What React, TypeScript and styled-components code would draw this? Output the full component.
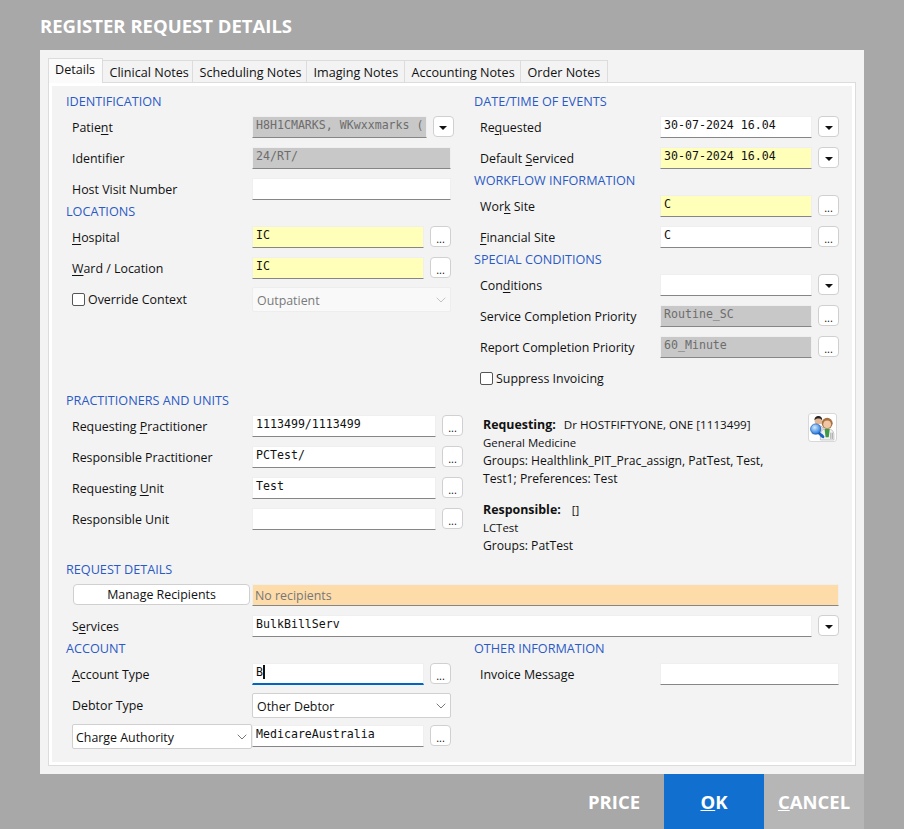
import * as React from 'react';
import styled, {createGlobalStyle} from 'styled-components';
import {ChevronDown} from 'lucide-react';

const GlobalStyle = createGlobalStyle`
  html, body {
    margin: 0;
    padding: 0;
    height: 100%;
    background: #a8a8a8;
  }
  * {
    box-sizing: border-box;
  }
`;

const Page = styled.div`
  width: 904px;
  height: 829px;
  padding-left: 40px;
  display: flex;
  flex-direction: column;
  background: #a8a8a8;
  font-family: "Open Sans", "Noto Sans", sans-serif;
  font-size: 12.4px;
  color: #111;
  overflow: hidden;
`;

const Title = styled.div`
  height: 50px;
  line-height: 52px;
  font-size: 18.5px;
  font-weight: 700;
  color: #fff;
`;

const Dialog = styled.div`
  width: 824px;
  height: 724px;
  padding: 8px 8px 8px;
  background: #f3f3f3;
  display: flex;
  flex-direction: column;
`;

const TabStrip = styled.div`
  display: flex;
  align-items: flex-end;
  height: 25px;
  margin-bottom: -1px;
  position: relative;
  z-index: 1;
`;

const Tab = styled.div<{$active?: boolean; $width: number}>`
  width: ${p => p.$width}px;
  height: ${p => (p.$active ? 25 : 23)}px;
  line-height: ${p => (p.$active ? 21 : 23)}px;
  padding-left: ${p => (p.$active ? 6 : 6.5)}px;
  font-size: 12.6px;
  white-space: nowrap;
  border: 1px solid #dcdcdc;
  border-left-width: ${p => (p.$active ? 1 : 0)}px;
  border-bottom-width: ${p => (p.$active ? 0 : 1)}px;
  background: ${p => (p.$active ? '#fbfbfb' : '#f3f3f3')};
`;

const TabPanel = styled.div`
  flex: 1;
  border: 1px solid #dcdcdc;
  background: #fff;
  padding: 3px;
`;

const Content = styled.div`
  height: 100%;
  background: #f3f3f3;
  padding: 9px 13px 0 14px;
`;

const TopColumns = styled.div`
  display: grid;
  grid-template-columns: 385px 365px;
  column-gap: 23px;
`;

const PractitionerColumns = styled.div`
  display: grid;
  grid-template-columns: 397px 1fr;
  column-gap: 20px;
  height: 169px;
`;

const Heading = styled.div`
  height: 13px;
  line-height: 13px;
  margin-bottom: 4px;
  font-size: 12.65px;
  color: #2a5ac6;
  white-space: nowrap;
`;

const Row = styled.div`
  display: grid;
  grid-template-columns: 180px 1fr;
  align-items: center;
  height: 31px;
  padding-left: 6px;
`;

const Label = styled.div`
  white-space: nowrap;
  u {
    text-underline-offset: 2px;
  }
`;

const Cell = styled.div`
  flex: 1;
  height: 23px;
  display: flex;
  align-items: flex-start;
  gap: 6px;
`;

const toneColours = {
  plain: '#ffffff',
  required: '#ffffb9',
  readonly: '#c8c8c8',
  notice: '#fedcaa',
};

const Field = styled.div<{$tone?: keyof typeof toneColours; $focus?: boolean}>`
  flex: 1;
  min-width: 0;
  height: 22px;
  padding: 0 2px 4px 3px;
  display: flex;
  align-items: center;
  overflow: hidden;
  white-space: nowrap;
  background: ${p => toneColours[p.$tone || 'plain']};
  border: 1px solid #efefef;
  border-bottom: ${p => (p.$focus ? '2px solid #0067c0' : '1px solid #868686')};
  font-family: "DejaVu Sans Mono", "Liberation Mono", monospace;
  font-size: 11.6px;
  color: ${p => (p.$tone === 'readonly' ? '#6d6d6d' : '#111')};
`;

const NoticeField = styled(Field)`
  font-family: "Open Sans", "Noto Sans", sans-serif;
  font-size: 12.4px;
  color: #777;
  padding: 0 2px;
`;

const Caret = styled.span`
  display: inline-block;
  width: 2px;
  height: 14px;
  background: #111;
`;

const SquareButton = styled.button`
  flex: none;
  width: 21px;
  height: 21px;
  padding: 0;
  border: 1px solid #d0d0d0;
  border-radius: 4px;
  background: #fff;
  display: flex;
  align-items: flex-end;
  justify-content: center;
  font-family: "Open Sans", sans-serif;
  font-size: 11px;
  line-height: 15px;
  color: #111;
`;

const ArrowButton = styled(SquareButton)`
  align-items: center;
`;

const Arrow = styled.span`
  margin-top: 2px;
  width: 0;
  height: 0;
  border-left: 4px solid transparent;
  border-right: 4px solid transparent;
  border-top: 4px solid #111;
`;

const Select = styled.div<{$disabled?: boolean}>`
  flex: 1;
  height: 25px;
  margin-top: -1px;
  padding: 1px 3px 0 4px;
  display: flex;
  align-items: center;
  justify-content: space-between;
  white-space: nowrap;
  background: ${p => (p.$disabled ? '#f9f9f9' : '#fff')};
  border: 1px solid ${p => (p.$disabled ? '#ededed' : '#d0d0d0')};
  border-radius: 2px;
  color: ${p => (p.$disabled ? '#7a7a7a' : '#111')};
  svg {
    color: ${p => (p.$disabled ? '#b5b5b5' : '#555')};
    margin-right: -2px;
  }
`;

const ChargeSelect = styled(Select)`
  flex: none;
  width: 180px;
  margin: 0;
  padding-left: 3px;
`;

const CheckLabel = styled.label`
  display: flex;
  align-items: center;
  gap: 3px;
  white-space: nowrap;
`;

const CheckBox = styled.span`
  width: 13px;
  height: 13px;
  border: 1px solid #555;
  border-radius: 2px;
  background: #fff;
`;

const Info = styled.div`
  padding-top: 17px;
  display: flex;
  justify-content: space-between;
  align-items: flex-start;
  padding-right: 2px;
`;

const InfoText = styled.div`
  width: 300px;
  padding-top: 5px;
  font-size: 11.4px;
  line-height: 18px;
`;

const InfoLead = styled.div`
  margin-top: 13px;
`;

const GroupLine = styled.div`
  font-size: 12.15px;
`;

const DoctorName = styled.span`
  font-size: 11.65px;
`;

const Strong = styled.b`
  font-size: 12.4px;
  font-weight: 700;
  margin-right: 8px;
`;

const IconButton = styled.div`
  flex: none;
  width: 29px;
  height: 29px;
  margin-top: 2px;
  border: 1px solid #d8d8d8;
  border-radius: 3px;
  background: #fff;
  display: flex;
  align-items: center;
  justify-content: center;
`;

const RequestRow = styled.div`
  display: flex;
  align-items: flex-start;
  gap: 2px;
  height: 31px;
  padding: 4px 0 0 7px;
`;

const ManageButton = styled.button`
  flex: none;
  width: 177px;
  height: 21px;
  padding: 0;
  border: 1px solid #d0d0d0;
  border-radius: 4px;
  background: #fff;
  font-family: inherit;
  font-size: inherit;
  color: #111;
`;

const ChargeRow = styled.div`
  display: flex;
  align-items: center;
  height: 31px;
  padding-left: 6px;
`;

const Footer = styled.div`
  display: flex;
  justify-content: flex-end;
  width: 824px;
  height: 55px;
`;

const FooterButton = styled.button<{$bg: string}>`
  width: 100px;
  height: 100%;
  padding: 0;
  border: 0;
  background: ${p => p.$bg};
  color: #fff;
  font-family: inherit;
  font-size: 18.5px;
  font-weight: 700;
`;

const DoctorsIcon = () => (
  <svg width="26" height="26" viewBox="0 0 25 25">
    <defs>
      <radialGradient id="lens" cx="0.4" cy="0.35" r="0.7">
        <stop offset="0" stopColor="#cfeaff" />
        <stop offset="1" stopColor="#1a6fd8" />
      </radialGradient>
    </defs>
    <path d="M2 16c0-4 3-6 6-6s5 2 5 5v3H2z" fill="#e9e9e9" stroke="#9a9a9a" strokeWidth="0.6" />
    <circle cx="8" cy="5.5" r="3.6" fill="#e3b795" />
    <path d="M4.3 5c0-3 2-4 3.8-4s3.7 1 3.6 4c-1-1.400-2-1.700-3.700-1.700S5.300 3.700 4.300 5z" fill="#262626" />
    <path d="M10 24v-5c0-4 3-6 6.500-6s6.500 2 6.500 6v5z" fill="#f1f1f1" stroke="#a8a8a8" strokeWidth="0.6" />
    <path d="M14 13.500h5l-1 8h-3z" fill="#3f9a45" />
    <path d="M20 17v6M21.500 17v6" stroke="#9a9a9a" strokeWidth="0.8" />
    <circle cx="16.500" cy="8" r="5.300" fill="#a9713f" />
    <circle cx="16.500" cy="9" r="3.700" fill="#efc7a6" />
    <path d="M6 15l6.500 6" stroke="#1d62c4" strokeWidth="2.600" strokeLinecap="round" />
    <path d="M10.500 21l2-2" stroke="#1d62c4" strokeWidth="1.500" />
    <circle cx="5.500" cy="13.500" r="5" fill="url(#lens)" stroke="#1557b5" strokeWidth="0.6" />
  </svg>
);

const Dots = () => <SquareButton>...</SquareButton>;
const Drop = () => (
  <ArrowButton>
    <Arrow />
  </ArrowButton>
);
const SelectArrow = () => <ChevronDown size={16} strokeWidth={1.2} />;

const App = () => (
  <Page>
    <GlobalStyle />
    <Title>REGISTER REQUEST DETAILS</Title>
    <Dialog>
      <TabStrip>
        <Tab $active $width={55}>Details</Tab>
        <Tab $width={90}>Clinical Notes</Tab>
        <Tab $width={114}>Scheduling Notes</Tab>
        <Tab $width={98}>Imaging Notes</Tab>
        <Tab $width={116}>Accounting Notes</Tab>
        <Tab $width={87}>Order Notes</Tab>
      </TabStrip>
      <TabPanel>
        <Content>
          <TopColumns>
            <div>
              <Heading>IDENTIFICATION</Heading>
              <Row>
                <Label>Patie<u>n</u>t</Label>
                <Cell>
                  <Field $tone="readonly">H8H1CMARKS, WKwxxmarks (</Field>
                  <Drop />
                </Cell>
              </Row>
              <Row>
                <Label>Identifier</Label>
                <Cell><Field $tone="readonly">24/RT/</Field></Cell>
              </Row>
              <Row>
                <Label>Host Visit Number</Label>
                <Cell><Field /></Cell>
              </Row>
              <Heading>LOCATIONS</Heading>
              <Row>
                <Label><u>H</u>ospital</Label>
                <Cell>
                  <Field $tone="required">IC</Field>
                  <Dots />
                </Cell>
              </Row>
              <Row>
                <Label><u>W</u>ard / Location</Label>
                <Cell>
                  <Field $tone="required">IC</Field>
                  <Dots />
                </Cell>
              </Row>
              <Row>
                <CheckLabel><CheckBox />Override Context</CheckLabel>
                <Cell>
                  <Select $disabled>Outpatient<SelectArrow /></Select>
                </Cell>
              </Row>
            </div>
            <div>
              <Heading>DATE/TIME OF EVENTS</Heading>
              <Row>
                <Label>Re<u>q</u>uested</Label>
                <Cell>
                  <Field>30-07-2024 16.04</Field>
                  <Drop />
                </Cell>
              </Row>
              <Row>
                <Label>Default <u>S</u>erviced</Label>
                <Cell>
                  <Field $tone="required">30-07-2024 16.04</Field>
                  <Drop />
                </Cell>
              </Row>
              <Heading>WORKFLOW INFORMATION</Heading>
              <Row>
                <Label>Wor<u>k</u> Site</Label>
                <Cell>
                  <Field $tone="required">C</Field>
                  <Dots />
                </Cell>
              </Row>
              <Row>
                <Label><u>F</u>inancial Site</Label>
                <Cell>
                  <Field>C</Field>
                  <Dots />
                </Cell>
              </Row>
              <Heading>SPECIAL CONDITIONS</Heading>
              <Row>
                <Label>Con<u>d</u>itions</Label>
                <Cell>
                  <Field />
                  <Drop />
                </Cell>
              </Row>
              <Row>
                <Label>Service Completion Priority</Label>
                <Cell>
                  <Field $tone="readonly">Routine_SC</Field>
                  <Dots />
                </Cell>
              </Row>
              <Row>
                <Label>Report Completion Priority</Label>
                <Cell>
                  <Field $tone="readonly">60_Minute</Field>
                  <Dots />
                </Cell>
              </Row>
              <Row>
                <CheckLabel><CheckBox />Suppress Invoicing</CheckLabel>
              </Row>
            </div>
          </TopColumns>
          <PractitionerColumns>
            <div>
              <Heading>PRACTITIONERS AND UNITS</Heading>
              <Row>
                <Label>Requesting <u>P</u>ractitioner</Label>
                <Cell>
                  <Field>1113499/1113499</Field>
                  <Dots />
                </Cell>
              </Row>
              <Row>
                <Label>Responsible Practitioner</Label>
                <Cell>
                  <Field>PCTest/</Field>
                  <Dots />
                </Cell>
              </Row>
              <Row>
                <Label>Requesting <u>U</u>nit</Label>
                <Cell>
                  <Field>Test</Field>
                  <Dots />
                </Cell>
              </Row>
              <Row>
                <Label>Responsible Unit</Label>
                <Cell>
                  <Field />
                  <Dots />
                </Cell>
              </Row>
            </div>
            <Info>
              <InfoText>
                <div><Strong>Requesting:</Strong><DoctorName>Dr HOSTFIFTYONE, ONE [1113499]</DoctorName></div>
                <div>General Medicine</div>
                <GroupLine>Groups: Healthlink_PIT_Prac_assign, PatTest, Test,</GroupLine>
                <GroupLine>Test1; Preferences: Test</GroupLine>
                <InfoLead><Strong>Responsible:</Strong> []</InfoLead>
                <div>LCTest</div>
                <GroupLine>Groups: PatTest</GroupLine>
              </InfoText>
              <IconButton><DoctorsIcon /></IconButton>
            </Info>
          </PractitionerColumns>
          <Heading>REQUEST DETAILS</Heading>
          <RequestRow>
            <ManageButton>Manage Recipients</ManageButton>
            <NoticeField $tone="notice">No recipients</NoticeField>
          </RequestRow>
          <Row>
            <Label>S<u>e</u>rvices</Label>
            <Cell>
              <Field>BulkBillServ</Field>
              <Drop />
            </Cell>
          </Row>
          <TopColumns>
            <div>
              <Heading>ACCOUNT</Heading>
              <Row>
                <Label><u>A</u>ccount Type</Label>
                <Cell>
                  <Field $focus>B<Caret /></Field>
                  <Dots />
                </Cell>
              </Row>
              <Row>
                <Label>Debtor Type</Label>
                <Cell>
                  <Select>Other Debtor<SelectArrow /></Select>
                </Cell>
              </Row>
              <ChargeRow>
                <ChargeSelect>Charge Authority<SelectArrow /></ChargeSelect>
                <Cell>
                  <Field>MedicareAustralia</Field>
                  <Dots />
                </Cell>
              </ChargeRow>
            </div>
            <div>
              <Heading>OTHER INFORMATION</Heading>
              <Row>
                <Label>Invoice Message</Label>
                <Cell>
                  <Field />
                </Cell>
              </Row>
            </div>
          </TopColumns>
        </Content>
      </TabPanel>
    </Dialog>
    <Footer>
      <FooterButton $bg="#a8a8a8">PRICE</FooterButton>
      <FooterButton $bg="#116fd0"><u>O</u>K</FooterButton>
      <FooterButton $bg="#b6b6b6"><u>C</u>ANCEL</FooterButton>
    </Footer>
  </Page>
);

export default App;
